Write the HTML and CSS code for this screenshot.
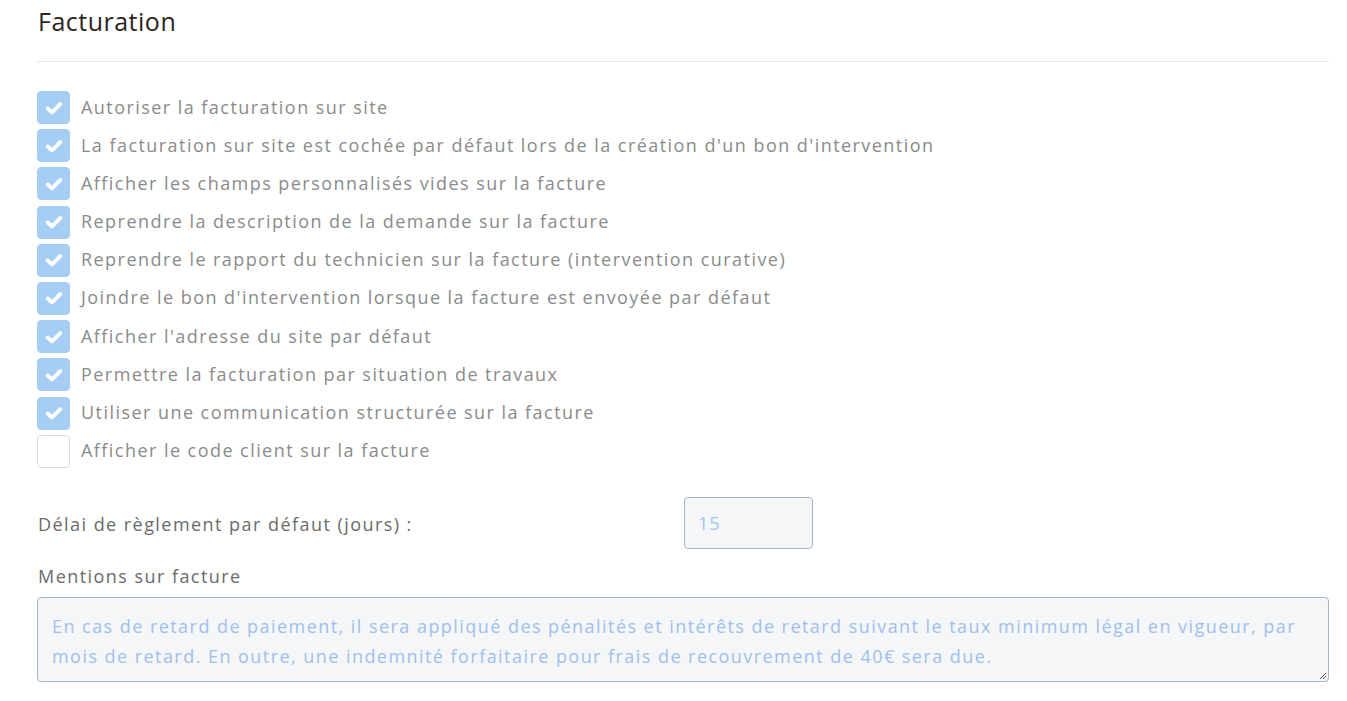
FILE: index.html
```html
<!DOCTYPE html>
<html lang="fr">
<head>
<meta charset="utf-8">
<link rel="stylesheet" href="styles.css">
<title>Facturation</title>
</head>
<body>
<div class="page">
  <h2 class="title">Facturation</h2>
  <hr class="sep">
  <ul class="checks">
    <li class="check on"><span class="box"><svg viewBox="0 0 16 16"><path d="M3.8 8.3 L6.6 10.9 L12.2 5.4" /></svg></span><span class="lbl">Autoriser la facturation sur site</span></li>
    <li class="check on"><span class="box"><svg viewBox="0 0 16 16"><path d="M3.8 8.3 L6.6 10.9 L12.2 5.4" /></svg></span><span class="lbl">La facturation sur site est cochée par défaut lors de la création d'un bon d'intervention</span></li>
    <li class="check on"><span class="box"><svg viewBox="0 0 16 16"><path d="M3.8 8.3 L6.6 10.9 L12.2 5.4" /></svg></span><span class="lbl">Afficher les champs personnalisés vides sur la facture</span></li>
    <li class="check on"><span class="box"><svg viewBox="0 0 16 16"><path d="M3.8 8.3 L6.6 10.9 L12.2 5.4" /></svg></span><span class="lbl">Reprendre la description de la demande sur la facture</span></li>
    <li class="check on"><span class="box"><svg viewBox="0 0 16 16"><path d="M3.8 8.3 L6.6 10.9 L12.2 5.4" /></svg></span><span class="lbl">Reprendre le rapport du technicien sur la facture (intervention curative)</span></li>
    <li class="check on"><span class="box"><svg viewBox="0 0 16 16"><path d="M3.8 8.3 L6.6 10.9 L12.2 5.4" /></svg></span><span class="lbl">Joindre le bon d'intervention lorsque la facture est envoyée par défaut</span></li>
    <li class="check on"><span class="box"><svg viewBox="0 0 16 16"><path d="M3.8 8.3 L6.6 10.9 L12.2 5.4" /></svg></span><span class="lbl">Afficher l'adresse du site par défaut</span></li>
    <li class="check on"><span class="box"><svg viewBox="0 0 16 16"><path d="M3.8 8.3 L6.6 10.9 L12.2 5.4" /></svg></span><span class="lbl">Permettre la facturation par situation de travaux</span></li>
    <li class="check on"><span class="box"><svg viewBox="0 0 16 16"><path d="M3.8 8.3 L6.6 10.9 L12.2 5.4" /></svg></span><span class="lbl">Utiliser une communication structurée sur la facture</span></li>
    <li class="check"><span class="box"></span><span class="lbl">Afficher le code client sur la facture</span></li>
  </ul>
  <div class="field-row">
    <label class="field-label">Délai de règlement par défaut (jours) :</label>
    <div class="input">15</div>
  </div>
  <div class="mentions-label">Mentions sur facture</div>
  <div class="textarea">En cas de retard de paiement, il sera appliqué des pénalités et intérêts de retard suivant le taux minimum légal en vigueur, par mois de retard. En outre, une indemnité forfaitaire pour frais de recouvrement de 40€ sera due.<svg class="grip" viewBox="0 0 10 10"><path d="M9 3 L3 9 M9 6 L6 9" /></svg></div>
</div>
</body>
</html>
```
FILE: styles.css
```css
* { box-sizing: border-box; }
html, body { margin: 0; padding: 0; background: #ffffff; }
body {
  font-family: "Open Sans", "Noto Sans", sans-serif;
  color: #8a8a8a;
}
.page {
  padding: 0 18px 0 37px;
}
.title {
  margin: 0;
  padding-top: 5px;
  height: 61px;
  font-size: 25px;
  font-weight: 400;
  color: #2a2522;
  line-height: 32px;
  letter-spacing: 0.5px;
  padding-left: 1px;
}
.sep {
  margin: 0;
  border: 0;
  border-top: 1px solid #e1e8ef;
}
.checks {
  list-style: none;
  margin: 29px 0 0;
  padding: 0;
  display: flex;
  flex-direction: column;
  gap: 5.2px;
}
.check {
  display: flex;
  align-items: center;
  gap: 11px;
  height: 33px;
}
.box {
  width: 33px;
  height: 33px;
  border-radius: 4px;
  border: 1px solid #d9dce0;
  background: #fff;
  display: flex;
  align-items: center;
  justify-content: center;
  flex: none;
}
.check.on .box {
  background: #a6cef5;
  border-color: #a6cef5;
}
.box svg {
  width: 24px;
  height: 24px;
  fill: none;
  stroke: #fff;
  stroke-width: 2.6;
  stroke-linecap: round;
  stroke-linejoin: round;
}
.lbl {
  font-size: 18px;
  letter-spacing: 1.45px;
  color: #8b8b8b;
  white-space: nowrap;
  position: relative;
  top: -1px;
}
.field-row {
  display: flex;
  align-items: center;
  margin-top: 29px;
  height: 52px;
}
.field-label {
  width: 647px;
  font-size: 18px;
  letter-spacing: 1.45px;
  color: #6b6b6b;
  padding-left: 1px;
  padding-top: 3px;
}
.input {
  width: 129px;
  height: 52px;
  border: 1px solid #a9b6c7;
  border-radius: 4px;
  background: #f4f6f8;
  color: #a5c4ee;
  font-size: 18px;
  letter-spacing: 1px;
  padding-left: 13px;
  display: flex;
  align-items: center;
}
.mentions-label {
  margin-top: 15px;
  font-size: 18px;
  letter-spacing: 1.45px;
  color: #6b6b6b;
  line-height: 24px;
  padding-left: 1px;
}
.textarea {
  position: relative;
  margin-top: 9px;
  height: 85px;
  border: 1px solid #a9b6c7;
  border-radius: 4px;
  background: #f4f6f8;
  color: #a0c0ec;
  font-size: 18px;
  letter-spacing: 1.45px;
  line-height: 30px;
  padding: 13px 14px 0 14px;
}
.grip {
  position: absolute;
  right: 1px;
  bottom: 1px;
  width: 10px;
  height: 10px;
  stroke: #555;
  stroke-width: 1;
  fill: none;
}
```
